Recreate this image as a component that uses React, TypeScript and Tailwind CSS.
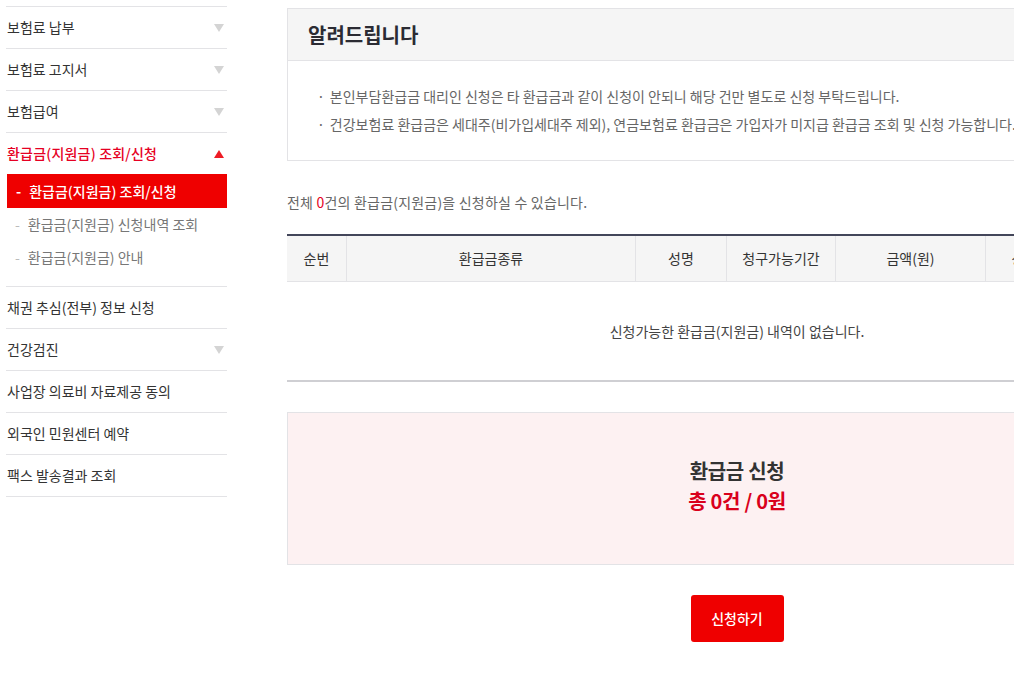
import React from "react";

const font = { fontFamily: '"Noto Sans CJK KR", "Noto Sans", sans-serif' };

const Down = () => (
  <svg width="10" height="8" viewBox="0 0 10 8" className="shrink-0">
    <path d="M0 0 H10 L5 8 Z" fill="#d4d4d4" />
  </svg>
);

const Up = () => (
  <svg width="10" height="8" viewBox="0 0 10 8" className="shrink-0">
    <path d="M0 8 H10 L5 0 Z" fill="#ee1c25" />
  </svg>
);

const MenuRow = ({ label, arrow }: { label: string; arrow?: boolean }) => (
  <div className="flex h-[42px] items-center justify-between border-b border-[#e3e3e6] pl-[1px] pr-[3px] text-[14px] text-[#333]">
    <span>{label}</span>
    {arrow && <Down />}
  </div>
);

const subItems = ["환급금(지원금) 조회/신청", "환급금(지원금) 신청내역 조회", "환급금(지원금) 안내"];

const columns = [
  { label: "순번", w: "w-[59px]" },
  { label: "환급금종류", w: "w-[289px]" },
  { label: "성명", w: "w-[91px]" },
  { label: "청구가능기간", w: "w-[109px]" },
  { label: "금액(원)", w: "w-[150px]" },
  { label: "상태", w: "w-[78px]" },
  { label: "신청", w: "flex-1" },
];

export default function App() {
  return (
    <div className="w-full min-h-[676px] overflow-hidden bg-white" style={font}>
      <div className="flex w-[1200px] items-start">
        {/* SIDEBAR */}
        <aside className="ml-[6px] mt-[6px] w-[221px] shrink-0 border-t border-[#e3e3e6]">
          <MenuRow label="보험료 납부" arrow />
          <MenuRow label="보험료 고지서" arrow />
          <MenuRow label="보험급여" arrow />

          <div className="border-b border-[#e3e3e6] pb-[12px]">
            <div className="flex h-[41px] items-center justify-between pl-[1px] pr-[3px] text-[14px] font-medium tracking-[0.2px] text-[#e60023]">
              <span>환급금(지원금) 조회/신청</span>
              <Up />
            </div>
            {subItems.map((s, i) => (
              <div
                key={s}
                className={`flex items-center gap-[8px] pl-[9px] text-[14px] ${
                  i === 0 ? "ml-[1px] h-[34px] bg-[#ef0000] font-medium text-white" : "h-[33px] text-[#777]"
                }`}
              >
                <span className={i === 0 ? "text-white font-bold" : "text-[#bbb]"}>-</span>
                <span>{s}</span>
              </div>
            ))}
          </div>

          <MenuRow label="채권 추심(전부) 정보 신청" />
          <MenuRow label="건강검진" arrow />
          <MenuRow label="사업장 의료비 자료제공 동의" />
          <MenuRow label="외국인 민원센터 예약" />
          <MenuRow label="팩스 발송결과 조회" />
        </aside>

        {/* MAIN */}
        <main className="ml-[60px] mt-[8px] w-[900px] shrink-0">
          {/* NOTICE */}
          <section className="border border-[#e3e3e6]">
            <div className="flex h-[52px] items-center border-b border-[#e3e3e6] bg-[#f5f5f5] pl-[20px]">
              <h2 className="text-[20px] font-bold text-[#2b2b33]">알려드립니다</h2>
            </div>
            <ul className="pb-[22px] pl-[29px] pt-[21px] text-[14px] leading-[28px] text-[#666]">
              <li className="flex gap-[5px]">
                <span>·</span>
                <span>본인부담환급금 대리인 신청은 타 환급금과 같이 신청이 안되니 해당 건만 별도로 신청 부탁드립니다.</span>
              </li>
              <li className="flex gap-[5px] whitespace-nowrap">
                <span>·</span>
                <span>
                  건강보험료 환급금은 세대주(비가입세대주 제외), 연금보험료 환급금은 가입자가 미지급 환급금 조회 및 신청 가능합니다.
                </span>
              </li>
            </ul>
          </section>

          <p className="mt-[31px] text-[14px] leading-[20px] tracking-[0.2px] text-[#666]">
            전체 <span className="text-[#e60023]">0</span>건의 환급금(지원금)을 신청하실 수 있습니다.
          </p>

          {/* TABLE */}
          <div className="mt-[22px] border-t-2 border-[#43465a]">
            <div className="flex h-[46px] border-b border-[#e3e3e6] bg-[#f5f5f5] text-[14px] text-[#333]">
              {columns.map((c, i) => (
                <div
                  key={c.label}
                  className={`${c.w} flex items-center justify-center ${i > 0 ? "border-l border-[#e3e3e6]" : ""}`}
                >
                  {c.label}
                </div>
              ))}
            </div>
            <div className="flex h-[100px] items-center justify-center border-b-2 border-[#cfcfd3] text-[14px] text-[#444]">
              신청가능한 환급금(지원금) 내역이 없습니다.
            </div>
          </div>

          {/* SUMMARY */}
          <div className="mt-[30px] flex h-[153px] flex-col items-center border border-[#e3e3e6] bg-[#fdf1f2] pt-[43px]">
            <p className="text-[20px] font-bold leading-[30px] tracking-[-0.3px] text-[#333]">환급금 신청</p>
            <p className="text-[20px] font-bold leading-[30px] tracking-[-0.3px] text-[#d9001b]">총 0건 / 0원</p>
          </div>

          <div className="mt-[30px] flex justify-center">
            <button className="h-[47px] w-[93px] rounded-[3px] bg-[#ef0000] text-[14px] font-medium text-white">
              신청하기
            </button>
          </div>
        </main>
      </div>
    </div>
  );
}
